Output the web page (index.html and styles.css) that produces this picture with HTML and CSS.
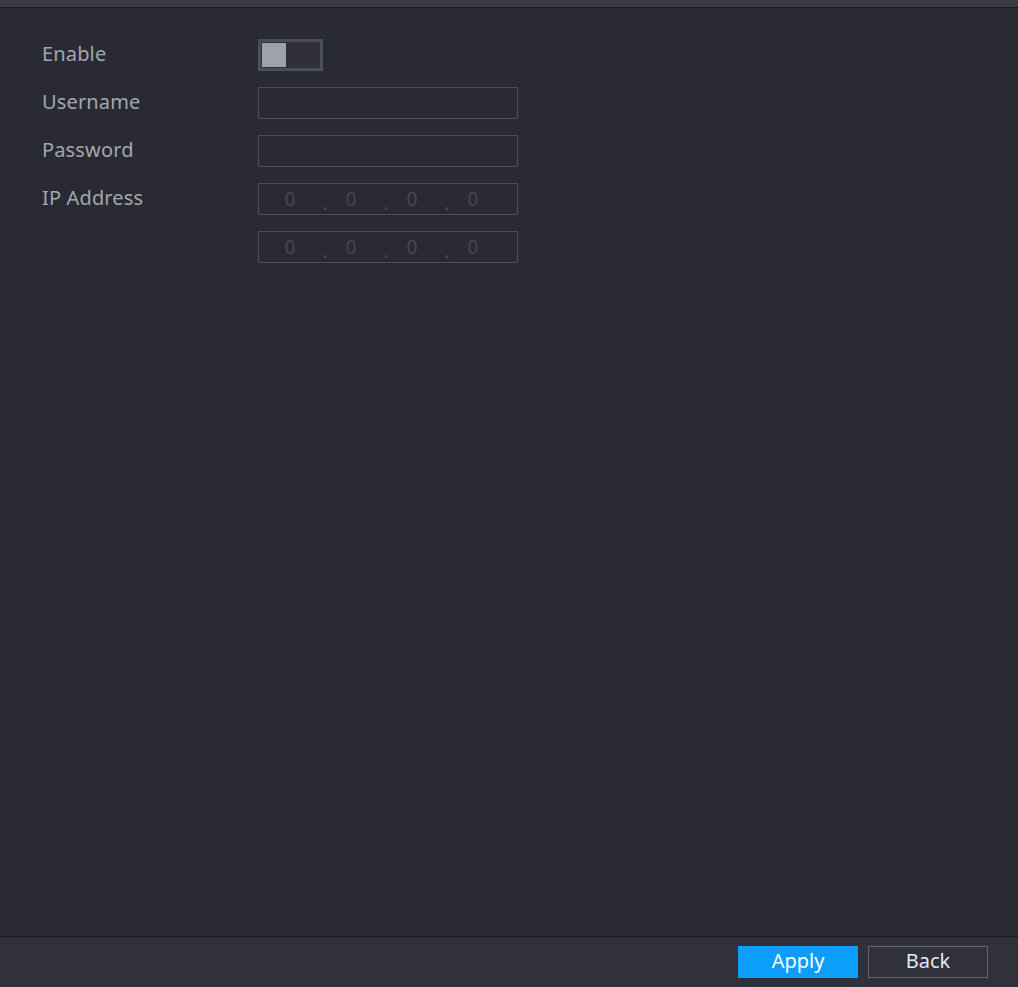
FILE: index.html
```html
<!DOCTYPE html>
<html lang="en">
<head>
    <meta charset="UTF-8">
    <title>PPPoE</title>
    <link rel="stylesheet" href="styles.css">
</head>
<body>
    <div class="top-bar"></div>
    <div class="content">
        <div class="row">
            <label class="label">Enable</label>
            <div class="toggle">
                <span class="knob"></span>
            </div>
        </div>
        <div class="row">
            <label class="label">Username</label>
            <div class="field"></div>
        </div>
        <div class="row">
            <label class="label">Password</label>
            <div class="field"></div>
        </div>
        <div class="row">
            <label class="label">IP Address</label>
            <div class="field ip">
                <span>0</span><i>.</i><span>0</span><i>.</i><span>0</span><i>.</i><span>0</span>
            </div>
        </div>
        <div class="row">
            <label class="label"></label>
            <div class="field ip">
                <span>0</span><i>.</i><span>0</span><i>.</i><span>0</span><i>.</i><span>0</span>
            </div>
        </div>
    </div>
    <div class="bottom-bar">
        <button class="btn apply">Apply</button>
        <button class="btn back">Back</button>
    </div>
</body>
</html>
```

FILE: styles.css
```css
html, body {
    height: 100%;
}

body {
    margin: 0;
    background-color: #292a33;
    font-family: "Noto Sans", "Open Sans", sans-serif;
    display: flex;
    flex-direction: column;
}

.top-bar {
    height: 7px;
    background-color: #3a3b45;
    border-bottom: 1px solid #18191e;
}

.content {
    flex: 1;
    padding: 31px 0 0 42px;
    display: flex;
    flex-direction: column;
    gap: 16px;
}

.row {
    display: flex;
    align-items: center;
    height: 32px;
}

.label {
    width: 216px;
    font-size: 20px;
    letter-spacing: 0.15px;
    color: #a2a7ae;
    padding-bottom: 4px;
}

.toggle {
    box-sizing: border-box;
    width: 65px;
    height: 32px;
    border: 3px solid #4a5059;
    padding: 1px;
    background-color: #2f3038;
    background-image: repeating-conic-gradient(#34353d 0 25%, #2b2c34 0 50%);
    background-size: 2px 2px;
}

.knob {
    display: block;
    width: 24px;
    height: 24px;
    background-color: #9ea3a9;
    background-image: repeating-conic-gradient(#a6aab0 0 25%, #969aa1 0 50%);
    background-size: 2px 2px;
}

.field {
    box-sizing: border-box;
    width: 260px;
    height: 32px;
    border: 1px solid #4a4f57;
}

.ip {
    display: flex;
    align-items: center;
    padding-left: 25px;
    font-size: 19px;
    color: #454850;
}

.ip span {
    width: 12px;
    text-align: center;
}

.ip i {
    box-sizing: border-box;
    font-style: normal;
    width: 49px;
    padding: 6px 0 0 9px;
    text-align: center;
    font-size: 20px;
}

.bottom-bar {
    height: 51px;
    border-top: 1px solid #18191e;
    background-color: #30313b;
    display: flex;
    justify-content: flex-end;
    align-items: flex-start;
    gap: 10px;
    padding: 9px 30px 0 0;
    box-sizing: border-box;
}

.btn {
    width: 120px;
    height: 32px;
    font-family: inherit;
    font-size: 20px;
    padding: 0 0 2px;
    line-height: 28px;
    cursor: pointer;
}

.apply {
    background-color: #0c9efd;
    border: none;
    color: #ffffff;
}

.back {
    background-color: transparent;
    border: 1px solid #66676d;
    color: #e4e8ee;
}
```
